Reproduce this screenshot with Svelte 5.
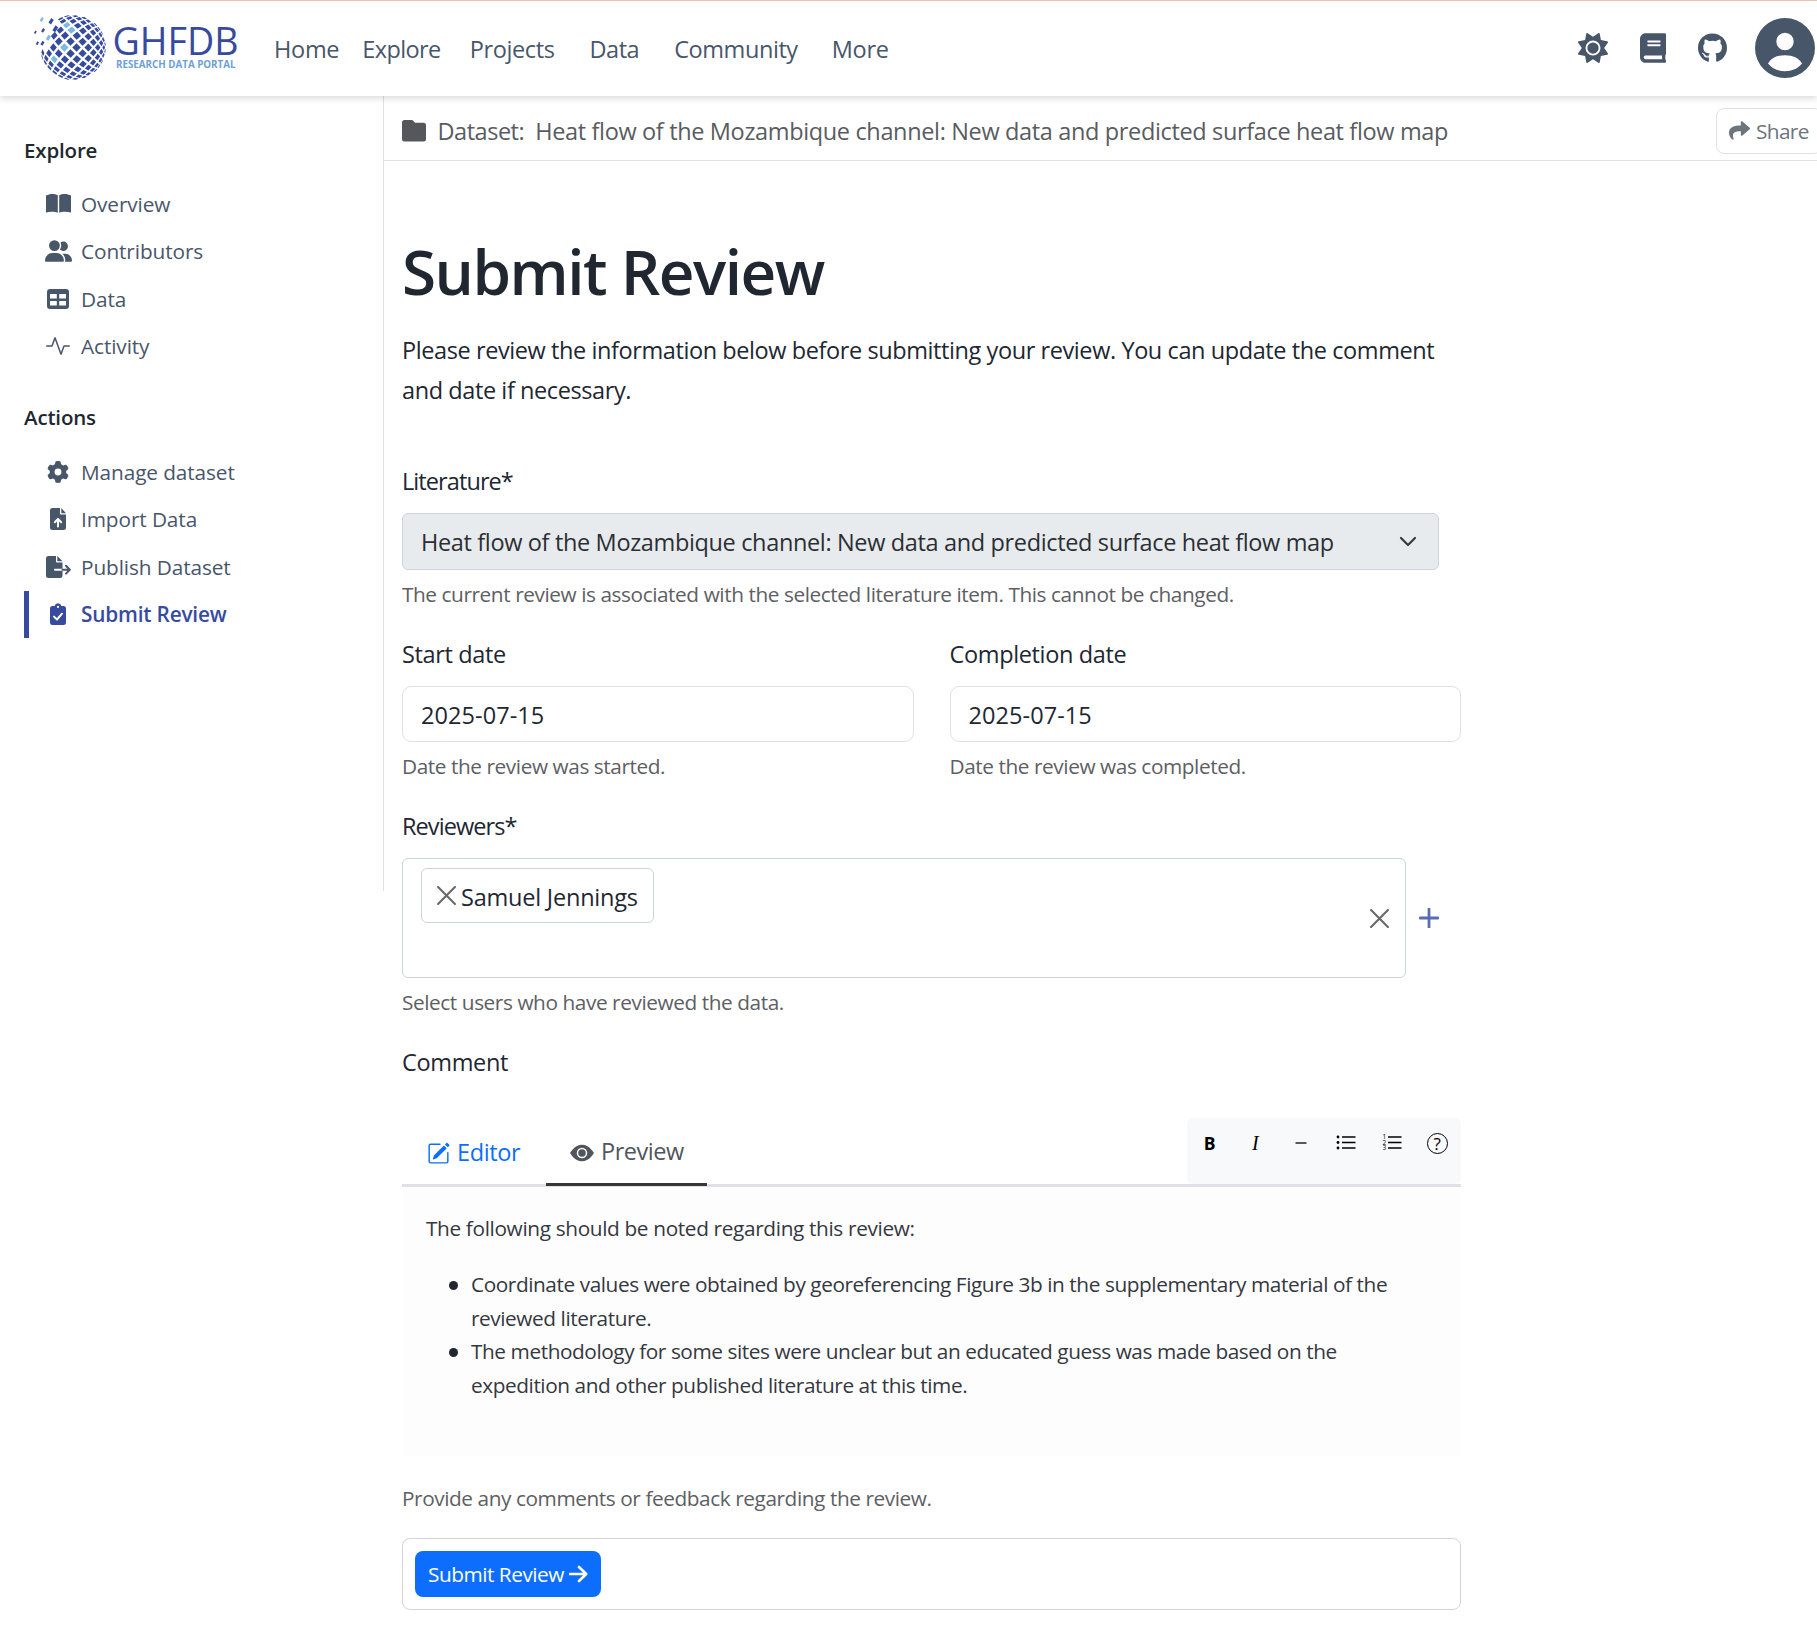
<script>
  const title = 'Heat flow of the Mozambique channel: New data and predicted surface heat flow map';
  const navItems = ['Home', 'Explore', 'Projects', 'Data', 'Community', 'More'];

  const sections = [
    {
      heading: 'Explore',
      items: [
        { label: 'Overview', icon: 'book' },
        { label: 'Contributors', icon: 'users' },
        { label: 'Data', icon: 'table' },
        { label: 'Activity', icon: 'activity' }
      ]
    },
    {
      heading: 'Actions',
      items: [
        { label: 'Manage dataset', icon: 'gear' },
        { label: 'Import Data', icon: 'upload' },
        { label: 'Publish Dataset', icon: 'export' },
        { label: 'Submit Review', icon: 'clipboard', active: true }
      ]
    }
  ];

  // Globe: a diamond lattice wrapped on a sphere whose pole sits left of centre.
  const CX = 45, CY = 36.5, R = 32.7, TILT = 0.27, STEP = 0.268, HALF = 0.094;
  function project(a, b) {
    const u = (a + b) * Math.SQRT1_2;
    const v = (b - a) * Math.SQRT1_2;
    const rho = Math.hypot(u, v) || 1e-6;
    const x = (Math.sin(rho) * u) / rho;
    const y = (Math.sin(rho) * v) / rho;
    const z = Math.cos(rho);
    const c = Math.cos(TILT), s = Math.sin(TILT);
    return [CX + R * (x * c - z * s), CY + R * y, x * s + z * c];
  }
  const light = ['0,0', '2,-1', '2,-2', '-2,0'];
  const cells = [];
  for (let i = -9; i <= 9; i++) {
    for (let j = -9; j <= 9; j++) {
      const a = i * STEP, b = j * STEP;
      if (Math.hypot(a, b) > 2.1) continue;
      const centre = project(a, b);
      if (centre[2] < 0.1) continue;
      if (centre[0] < 22.5 && centre[1] < 40) continue;
      if (centre[0] < 30 && centre[1] < 21) continue;
      const points = [[-HALF, -HALF], [HALF, -HALF], [HALF, HALF], [-HALF, HALF]]
        .map(([p, q]) => project(a + p, b + q).slice(0, 2).map((n) => n.toFixed(2)).join(','))
        .join(' ');
      cells.push({ points, light: light.includes(`${i},${j}`) });
    }
  }
  // Diamonds that have drifted off the globe: x, y, radius, light.
  const loose = [
    [13.7, 8.5, 2.4, 1], [23, 10.2, 3.2, 0], [27.2, 17.8, 3.5, 0], [7.3, 21.2, 1.8, 0], [15, 19.4, 2.4, 0],
    [9.3, 32.2, 2, 0], [14.4, 32.2, 2.5, 0], [20.3, 26.7, 3, 1]
  ];
</script>

{#snippet icon(name)}
  {#if name === 'book'}
    <svg width="25" height="19" viewBox="0 0 25 19"><path d="M0 1.6C3.5-.3 8.500-.5 11.800 1.300V18.700C8.500 17.300 3.500 17.400 0 18.500ZM13.200 1.300C16.500-.5 21.500-.3 25 1.600V18.500C21.500 17.400 16.500 17.300 13.200 18.700Z" /></svg>
  {:else if name === 'users'}
    <svg width="27" height="22" viewBox="0 0 640 512"><path d="M96 128a128 128 0 1 1 256 0A128 128 0 1 1 96 128zM0 482.300C0 383.800 79.800 304 178.300 304h91.400C368.200 304 448 383.800 448 482.300c0 16.400-13.300 29.700-29.700 29.700H29.700C13.300 512 0 498.700 0 482.300zM609.300 512H471.400c5.400-9.400 8.600-20.300 8.600-32v-8c0-60.700-27.100-115.200-69.800-151.800c2.400-.1 4.700-.2 7.100-.2h61.400C567.800 320 640 392.200 640 481.300c0 17-13.800 30.700-30.700 30.700zM432 256c-31 0-59-12.600-79.300-32.900C372.400 196.500 384 163.600 384 128c0-26.800-6.600-52.100-18.300-74.300C384.300 40.100 407.200 32 432 32c61.900 0 112 50.100 112 112s-50.100 112-112 112z" /></svg>
  {:else if name === 'table'}
    <svg width="22" height="20" viewBox="0 0 22 20"><path fill-rule="evenodd" d="M3 0H19a3 3 0 0 1 3 3V17a3 3 0 0 1-3 3H3a3 3 0 0 1-3-3V3a3 3 0 0 1 3-3ZM3 5V9.500H9.800V5ZM12.200 5V9.500H19V5ZM3 12V16.500H9.800V12ZM12.200 12V16.500H19V12Z" /></svg>
  {:else if name === 'activity'}
    <svg width="24" height="24" viewBox="0 0 16 16"><path d="M6 2a.5.5 0 0 1 .47.33L10 12.036l1.530-4.208A.5.5 0 0 1 12 7.500h3.500a.5.5 0 0 1 0 1h-3.150l-1.880 5.170a.5.5 0 0 1-.94 0L6 3.964 4.470 8.171A.5.5 0 0 1 4 8.500H.5a.5.5 0 0 1 0-1h3.150l1.880-5.170A.5.5 0 0 1 6 2Z" /></svg>
  {:else if name === 'gear'}
    <svg width="22" height="22" viewBox="0 0 512 512"><path d="M495.900 166.600c3.200 8.700 .5 18.400-6.400 24.600l-43.300 39.400c1.100 8.300 1.700 16.800 1.700 25.400s-.6 17.100-1.700 25.400l43.300 39.400c6.900 6.200 9.600 15.900 6.400 24.600c-4.400 11.900-9.700 23.300-15.800 34.300l-4.700 8.100c-6.600 11-14 21.400-22.100 31.200c-5.900 7.200-15.700 9.600-24.500 6.800l-55.700-17.700c-13.400 10.300-28.200 18.900-44 25.400l-12.500 57.100c-2 9.100-9 16.300-18.200 17.800c-13.800 2.300-28 3.500-42.500 3.500s-28.700-1.200-42.500-3.500c-9.200-1.500-16.200-8.700-18.200-17.800l-12.500-57.100c-15.800-6.500-30.600-15.100-44-25.400L83.100 425.900c-8.800 2.800-18.600 .3-24.500-6.800c-8.100-9.800-15.500-20.200-22.100-31.200l-4.700-8.100c-6.100-11-11.400-22.400-15.800-34.300c-3.200-8.700-.5-18.400 6.400-24.600l43.300-39.400C64.600 273.100 64 264.600 64 256s.6-17.100 1.700-25.400L22.400 191.200c-6.900-6.200-9.600-15.900-6.400-24.600c4.400-11.900 9.700-23.300 15.800-34.300l4.700-8.100c6.600-11 14-21.400 22.100-31.200c5.900-7.200 15.700-9.600 24.500-6.800l55.700 17.700c13.400-10.300 28.200-18.900 44-25.400l12.500-57.100c2-9.100 9-16.300 18.200-17.800C227.300 1.200 241.500 0 256 0s28.700 1.200 42.500 3.500c9.200 1.500 16.200 8.700 18.200 17.800l12.500 57.100c15.800 6.500 30.600 15.100 44 25.400l55.700-17.700c8.800-2.800 18.600-.3 24.500 6.800c8.100 9.800 15.500 20.200 22.100 31.200l4.700 8.100c6.100 11 11.400 22.400 15.800 34.300zM256 336a80 80 0 1 0 0-160 80 80 0 1 0 0 160z" /></svg>
  {:else if name === 'upload'}
    <svg width="16" height="22" viewBox="0 0 16 22"><path d="M2.500 0H10V5.500a1 1 0 0 0 1 1H16V19.500A2.500 2.500 0 0 1 13.500 22H2.500A2.500 2.500 0 0 1 0 19.500V2.500A2.500 2.500 0 0 1 2.500 0ZM11.300 0 16 5.200H11.300Z" /><path class="cut" d="M8 18.500V11.500M4.800 14.200 8 11 11.200 14.200" /></svg>
  {:else if name === 'export'}
    <svg width="25" height="22" viewBox="0 0 25 22"><path d="M2.500 0H10V5.500a1 1 0 0 0 1 1H16.500V19.500A2.500 2.500 0 0 1 14 22H2.500A2.500 2.500 0 0 1 0 19.500V2.500A2.500 2.500 0 0 1 2.500 0ZM11.300 0 16.500 5.200H11.300Z" /><path class="cut" d="M9 13.700H16.500" /><path class="line" d="M16.500 13.700H23.500M20 9.800 23.800 13.700 20 17.600" /></svg>
  {:else}
    <svg width="16" height="22" viewBox="0 0 16 22"><path fill-rule="evenodd" d="M2.500 3H4.600A3.500 3.500 0 0 1 11.400 3H13.500A2.500 2.500 0 0 1 16 5.500V19.500A2.500 2.500 0 0 1 13.500 22H2.500A2.500 2.500 0 0 1 0 19.500V5.500A2.500 2.500 0 0 1 2.500 3ZM8 2.800A1.100 1.100 0 1 0 8 5 1.100 1.100 0 1 0 8 2.800Z" /><path class="cut" d="M4 13.600 7 16.500 12 10.700" /></svg>
  {/if}
{/snippet}

{#snippet cross(size)}
  <svg class="cross" width={size} height={size} viewBox="0 0 18 18"><path d="M1 1 17 17M17 1 1 17" /></svg>
{/snippet}

<div class="page">
  <header>
    <svg class="logo" width="215" height="76" viewBox="0 0 215 76" role="img" aria-label="GHFDB">
      {#each cells as cell}<polygon points={cell.points} class:light={cell.light} />{/each}
      {#each loose as [x, y, r, l]}
        <polygon points="{x - r * 0.8},{y + r * 0.4} {x + r * 0.1},{y - r} {x + r * 0.85},{y - r * 0.4} {x},{y + r}" class:light={l === 1} />
      {/each}
      <text class="brand" x="84.500" y="44.200" textLength="126" lengthAdjust="spacingAndGlyphs">GHFDB</text>
      <text class="tagline" x="88" y="56.500" textLength="119.500" lengthAdjust="spacingAndGlyphs">RESEARCH DATA PORTAL</text>
    </svg>
    <nav>
      {#each navItems as item}<a href="#top">{item}</a>{/each}
    </nav>
    <div class="tools">
      <svg width="30" height="30" viewBox="0 0 512 512"><path d="M361.500 1.200c5 2.100 8.600 6.600 9.600 11.900L391 121l107.900 19.800c5.300 1 9.800 4.600 11.900 9.600s1.500 10.700-1.600 15.200L446.900 256l62.300 90.300c3.100 4.500 3.700 10.200 1.600 15.200s-6.600 8.600-11.900 9.600L391 391 371.100 498.900c-1 5.300-4.600 9.800-9.600 11.900s-10.700 1.500-15.200-1.600L256 446.900l-90.300 62.300c-4.500 3.100-10.200 3.700-15.200 1.600s-8.600-6.600-9.600-11.900L121 391 13.100 371.100c-5.300-1-9.800-4.600-11.900-9.600s-1.500-10.700 1.600-15.200L65.100 256 2.800 165.700c-3.100-4.500-3.700-10.200-1.600-15.200s6.600-8.600 11.900-9.600L121 121 140.900 13.100c1-5.300 4.600-9.800 9.600-11.900s10.700-1.500 15.200 1.600L256 65.100 346.300 2.800c4.500-3.100 10.200-3.700 15.200-1.600zM160 256a96 96 0 1 1 192 0 96 96 0 1 1 -192 0zm224 0a128 128 0 1 0 -256 0 128 128 0 1 0 256 0z" /></svg>
      <svg width="26" height="30" viewBox="0 0 448 512"><path d="M448 360V24c0-13.300-10.700-24-24-24H96C43 0 0 43 0 96v320c0 53 43 96 96 96h328c13.300 0 24-10.700 24-24v-16c0-7.500-3.500-14.300-8.900-18.700-4.200-15.400-4.200-59.300 0-74.700 5.400-4.300 8.900-11.100 8.900-18.600zM128 134c0-3.300 2.700-6 6-6h212c3.300 0 6 2.700 6 6v20c0 3.300-2.700 6-6 6H134c-3.300 0-6-2.700-6-6v-20zm0 64c0-3.300 2.700-6 6-6h212c3.300 0 6 2.700 6 6v20c0 3.300-2.700 6-6 6H134c-3.300 0-6-2.700-6-6v-20zm253.400 250H96c-17.700 0-32-14.300-32-32 0-17.600 14.400-32 32-32h285.400c-1.900 17.100-1.900 46.900 0 64z" /></svg>
      <svg width="29" height="30" viewBox="0 0 496 512"><path d="M165.900 397.400c0 2-2.300 3.600-5.200 3.600-3.300.3-5.600-1.300-5.600-3.600 0-2 2.300-3.600 5.200-3.600 3-.3 5.600 1.300 5.600 3.600zm-31.100-4.500c-.7 2 1.300 4.300 4.300 4.900 2.600 1 5.600 0 6.200-2s-1.300-4.300-4.300-5.200c-2.600-.7-5.500.3-6.200 2.300zm44.200-1.700c-2.900.7-4.900 2.600-4.600 4.900.3 2 2.900 3.300 5.900 2.600 2.900-.7 4.900-2.600 4.600-4.600-.3-1.900-3-3.200-5.900-2.900zM244.800 8C106.100 8 0 113.300 0 252c0 110.900 69.800 205.800 169.500 239.200 12.800 2.300 17.300-5.600 17.300-12.100 0-6.200-.3-40.400-.3-61.400 0 0-70 15-84.700-29.800 0 0-11.400-29.100-27.800-36.600 0 0-22.900-15.700 1.600-15.400 0 0 24.900 2 38.600 25.800 21.900 38.600 58.600 27.500 72.900 20.900 2.300-16 8.800-27.100 16-33.700-55.900-6.200-112.300-14.300-112.300-110.500 0-27.500 7.600-41.300 23.600-58.900-2.600-6.500-11.100-33.300 2.600-67.900 20.900-6.500 69 27 69 27 20-5.600 41.500-8.500 62.800-8.500s42.800 2.900 62.800 8.500c0 0 48.100-33.600 69-27 13.700 34.700 5.200 61.400 2.600 67.900 16 17.700 25.800 31.500 25.800 58.900 0 96.500-58.900 104.200-114.800 110.500 9.200 7.900 17 22.900 17 46.400 0 33.700-.3 75.400-.3 83.600 0 6.500 4.600 14.400 17.300 12.100C428.200 457.800 496 362.900 496 252 496 113.300 383.500 8 244.800 8zM97.200 352.900c-1.300 1-1 3.300.7 5.200 1.600 1.600 3.900 2.300 5.200 1 1.300-1 1-3.300-.7-5.200-1.600-1.600-3.900-2.300-5.200-1z" /></svg>
      <svg class="avatar" width="60" height="60" viewBox="0 0 60 60"><path fill-rule="evenodd" d="M30 0A30 30 0 1 0 30 60 30 30 0 1 0 30 0ZM30 14.800A8.700 8.700 0 1 1 30 32.200 8.700 8.700 0 1 1 30 14.800ZM13 45.500C16 40 22 37.200 30 37.200S44 40 47 45.500C43 50.500 37 53.200 30 53.200S17 50.500 13 45.500Z" /></svg>
    </div>
  </header>

  <div class="body">
    <aside>
      {#each sections as section}
        <h2>{section.heading}</h2>
        <ul>
          {#each section.items as item}
            <li class:active={item.active}>
              <span class="slot">{@render icon(item.icon)}</span>{item.label}
            </li>
          {/each}
        </ul>
      {/each}
    </aside>

    <main>
      <div class="crumbs">
        <svg width="24" height="22" viewBox="0 0 24 22"><path d="M2.500 0H9.500a2.500 2.500 0 0 1 1.800.8L13 2.800H21.500A2.500 2.500 0 0 1 24 5.300V19A2.500 2.500 0 0 1 21.500 21.500H2.500A2.500 2.500 0 0 1 0 19V2.500A2.500 2.500 0 0 1 2.500 0Z" /></svg>
        <span class="kind">Dataset:</span>
        <span class="name">{title}</span>
        <button class="share">
          <svg width="21" height="21" viewBox="0 0 512 512"><path d="M503.691 189.836L327.687 37.851C312.281 24.546 288 35.347 288 56.015v80.053C127.371 137.907 0 170.100 0 322.326c0 61.441 39.581 122.309 83.333 154.132 13.653 9.931 33.111-2.533 28.077-18.631C66.066 312.814 132.917 274.316 288 272.085V360c0 20.700 24.300 31.453 39.687 18.164l176.004-151.985c11.070-9.562 11.086-26.762 0-36.343z" /></svg>
          Share
        </button>
      </div>

      <form onsubmit={(e) => e.preventDefault()}>
        <h1>Submit Review</h1>
        <p class="lead">Please review the information below before submitting your review. You can update the comment<br />and date if necessary.</p>

        <div class="field first">
          <div class="label tight">Literature*</div>
          <div class="select">
            <span>{title}</span>
            <svg width="18" height="12" viewBox="0 0 18 12"><path d="M2 2 9 9 16 2" /></svg>
          </div>
          <div class="help">The current review is associated with the selected literature item. This cannot be changed.</div>
        </div>

        <div class="dates">
          <div class="field">
            <div class="label">Start date</div>
            <div class="input">2025-07-15</div>
            <div class="help">Date the review was started.</div>
          </div>
          <div class="field">
            <div class="label">Completion date</div>
            <div class="input">2025-07-15</div>
            <div class="help">Date the review was completed.</div>
          </div>
        </div>

        <div class="field">
          <div class="label tight">Reviewers*</div>
          <div class="picker">
            <div class="box">
              <div class="tag">{@render cross(19)}<span>Samuel Jennings</span></div>
              {@render cross(19)}
            </div>
            <svg class="plus" width="20" height="20" viewBox="0 0 20 20"><path d="M10 1V19M1 10H19" /></svg>
          </div>
          <div class="help">Select users who have reviewed the data.</div>
        </div>

        <div class="field">
          <div class="label comment">Comment</div>
          <div class="tabs">
            <div class="tab editor">
              <svg width="23" height="23" viewBox="0 0 16 16"><path d="M15.502 1.940a.5.5 0 0 1 0 .706L14.459 3.690l-2-2L13.502.646a.5.5 0 0 1 .707 0l1.293 1.293zm-1.750 2.456-2-2L4.939 9.210a.5.5 0 0 0-.121.196l-.805 2.414a.25.25 0 0 0 .316.316l2.414-.805a.5.5 0 0 0 .196-.12l6.813-6.814z" /><path d="M1 13.500A1.500 1.500 0 0 0 2.500 15h11a1.500 1.500 0 0 0 1.500-1.500v-6a.5.5 0 0 0-1 0v6a.5.5 0 0 1-.5.5h-11a.5.5 0 0 1-.5-.5v-11a.5.5 0 0 1 .5-.5H9a.5.5 0 0 0 0-1H2.500A1.500 1.500 0 0 0 1 2.500v11z" /></svg>
              Editor
            </div>
            <div class="tab preview">
              <svg width="24" height="24" viewBox="0 0 16 16"><path d="M10.500 8a2.500 2.500 0 1 1-5 0 2.500 2.500 0 0 1 5 0z" /><path d="M0 8s3-5.500 8-5.500S16 8 16 8s-3 5.500-8 5.500S0 8 0 8zm8 3.500a3.500 3.500 0 1 0 0-7 3.500 3.500 0 0 0 0 7z" /></svg>
              Preview
            </div>
            <div class="toolbar">
              <b>B</b>
              <i>I</i>
              <svg width="12" height="20" viewBox="0 0 12 20"><path d="M.5 10H11.500" /></svg>
              <svg width="20" height="20" viewBox="0 0 20 20"><path d="M6 4H19.500M6 9.500H19.500M6 15H19.500" /><circle cx="2" cy="4" r="1.400" /><circle cx="2" cy="9.500" r="1.400" /><circle cx="2" cy="15" r="1.400" /></svg>
              <svg width="20" height="20" viewBox="0 0 20 20"><path d="M6 4H19.500M6 9.500H19.500M6 15H19.500" /><text x=".5" y="6.300">1</text><text x=".5" y="11.800">2</text><text x=".5" y="17.300">3</text></svg>
              <span class="question">?</span>
            </div>
          </div>
          <div class="rendered">
            <p>The following should be noted regarding this review:</p>
            <ul>
              <li>Coordinate values were obtained by georeferencing Figure 3b in the supplementary material of the<br />reviewed literature.</li>
              <li>The methodology for some sites were unclear but an educated guess was made based on the<br />expedition and other published literature at this time.</li>
            </ul>
          </div>
          <div class="help last">Provide any comments or feedback regarding the review.</div>
        </div>

        <div class="actions">
          <button class="submit">
            Submit Review
            <svg width="19" height="18" viewBox="0 0 19 18"><path d="M1 9H17M10 2 17.200 9 10 16" /></svg>
          </button>
        </div>
      </form>
    </main>
  </div>
</div>

<style>
  :global(body) { background: #fff; overflow: hidden; }
  .page {
    width: 1817px;
    height: 1634px;
    overflow: hidden;
    box-sizing: border-box;
    border-top: 1px solid #ecc5b0;
    font-family: 'Open Sans', 'Noto Sans', sans-serif;
    font-size: 23.5px;
    letter-spacing: -0.015em;
    color: #212731;
  }
  .page :global(*) { box-sizing: border-box; }
  svg { flex: none; display: block; fill: currentColor; }
  ul { list-style: none; margin: 0; padding: 0; }
  button { font: inherit; letter-spacing: inherit; }

  header {
    position: relative;
    height: 95px;
    display: flex;
    align-items: center;
    padding-left: 28px;
    box-shadow: 0 3px 6px rgba(0, 0, 0, 0.13);
    color: #48566a;
    white-space: nowrap;
  }
  .logo { fill: #364b9f; }
  .logo .light { fill: #7bb8e2; }
  .brand { font-size: 38.500px; letter-spacing: 0; }
  .tagline { font-size: 10.200px; font-weight: 700; letter-spacing: 0; fill: #6d9fd6; }
  nav { display: flex; gap: 25px; margin-left: 31px; }
  nav a { color: inherit; text-decoration: none; letter-spacing: -0.012em; }
  nav a:nth-child(1) { margin-right: -2px; }
  nav a:nth-child(2) { letter-spacing: -0.026em; margin-right: 4px; }
  nav a:nth-child(3) { letter-spacing: -0.016em; margin-right: 10px; }
  nav a:nth-child(4) { letter-spacing: -0.020em; margin-right: 10px; }
  nav a:nth-child(5) { letter-spacing: -0.018em; margin-right: 9px; }
  .tools { display: flex; align-items: center; gap: 32px; margin-left: auto; padding: 0 2px 1px 0; }
  .avatar { margin-left: -4px; }

  .body { display: flex; align-items: flex-start; }
  aside {
    flex: none;
    width: 384px;
    height: 795px;
    padding-top: 38.500px;
    border-right: 1px solid #dee2e6;
    font-size: 20.800px;
    letter-spacing: -0.005em;
  }
  h2 {
    margin: 0 0 15.300px;
    padding-left: 24px;
    font-size: 20.500px;
    font-weight: 600;
    line-height: 30px;
    letter-spacing: -0.008em;
  }
  ul + h2 { margin-top: 32px; margin-bottom: 15.600px; }
  aside li {
    display: flex;
    align-items: center;
    height: 47.600px;
    margin-left: 24px;
    padding-left: 14px;
    border-left: 5px solid transparent;
    color: #48566a;
  }
  .slot { width: 30px; margin-right: 8px; display: flex; justify-content: center; }
  aside li.active { color: #364b9f; border-color: #364b9f; font-weight: 600; letter-spacing: -0.009em; }
  .cut, .line { fill: none; stroke: #fff; stroke-width: 2; stroke-linecap: round; stroke-linejoin: round; }
  .line { stroke: currentColor; }

  main { flex: 1; min-width: 0; }
  .crumbs {
    display: flex;
    align-items: center;
    height: 65px;
    padding: 5px 0 0 18px;
    border-bottom: 1px solid #dee2e6;
    color: #595c5f;
    white-space: nowrap;
    overflow: hidden;
  }
  .crumbs svg { fill: #54585c; }
  .kind { margin: 0 11px 0 11.500px; letter-spacing: -0.020em; }
  .share {
    flex: none;
    display: flex;
    align-items: center;
    gap: 6px;
    width: 106px;
    height: 46px;
    margin-left: auto;
    margin-right: -5px;
    padding: 0 0 0 12px;
    border: 1px solid #dee2e6;
    border-radius: 8px;
    background: #fff;
    color: #6c757d;
    font-size: 20.800px;
    letter-spacing: -0.030em;
  }
  .crumbs .share svg { fill: #6c757d; }

  form { width: 1078px; padding: 70px 0 0 18px; white-space: nowrap; }
  h1 { margin: 0; font-size: 62px; font-weight: 600; line-height: 80px; letter-spacing: -0.024em; }
  .lead { margin: 19px 0 -1px; line-height: 40.200px; letter-spacing: -0.0175em; }
  .field { padding-top: 26px; }
  .first { padding-top: 54px; }
  .label { line-height: 37px; margin-bottom: 13px; }
  .tight { letter-spacing: -0.039em; }
  .help { margin-top: 8px; line-height: 32px; font-size: 20.800px; letter-spacing: -0.0205em; color: #5d6063; }
  .select {
    display: flex;
    align-items: center;
    justify-content: space-between;
    width: 1037px;
    height: 57px;
    padding: 0 21px 0 18px;
    border: 1px solid #ced4da;
    border-radius: 6px;
    background: #e8ebee;
    color: #2b2f33;
  }
  .select svg { fill: none; stroke: #343a40; stroke-width: 2.200; stroke-linecap: round; stroke-linejoin: round; }
  .dates { display: grid; grid-template-columns: 1fr 1fr; gap: 36px; width: 1059px; }
  .input {
    height: 56px;
    padding: 1px 18px 0;
    border: 1px solid #dee2e6;
    border-radius: 9px;
    line-height: 55px;
    letter-spacing: 0.003em;
  }
  .picker { display: flex; align-items: center; gap: 13px; }
  .box {
    display: flex;
    align-items: center;
    justify-content: space-between;
    width: 1004px;
    height: 120px;
    padding: 9px 16px 9px 18px;
    border: 1px solid #ced4da;
    border-radius: 6px;
  }
  .tag {
    align-self: flex-start;
    display: flex;
    align-items: center;
    gap: 5px;
    width: 233px;
    height: 55px;
    padding: 2px 0 0 15px;
    border: 1px solid #ced4da;
    border-radius: 6px;
    letter-spacing: -0.009em;
  }
  .cross { fill: none; stroke: #67696b; stroke-width: 2; stroke-linecap: round; }
  .tag .cross { margin-top: -2px; }
  .plus { fill: none; stroke: #5a6db3; stroke-width: 2.800; stroke-linecap: round; }

  .comment { margin-bottom: 0; }
  .tabs {
    display: flex;
    height: 69px;
    width: 1059px;
    margin-top: 37px;
    border-bottom: 3px solid #dee2e6;
  }
  .tab { display: flex; align-items: center; height: 68px; padding-bottom: 1px; }
  .tab svg { margin-top: 4px; }
  .editor { width: 143.500px; padding-left: 25px; gap: 7px; color: #0d6efd; }
  .preview { width: 161px; padding-left: 24.500px; gap: 7px; color: #50565c; border-bottom: 3px solid #393634; padding-bottom: 0; margin-bottom: -2px; letter-spacing: -0.020em; }
  .toolbar {
    display: grid;
    grid-template-columns: repeat(6, 45.500px);
    justify-items: center;
    align-items: center;
    align-content: start;
    grid-auto-rows: 50px;
    width: 274px;
    height: 66px;
    margin-left: auto;
    border-radius: 6px;
    background: #f8f9fb;
    color: #000;
    letter-spacing: 0;
  }
  .toolbar svg { stroke: #000; stroke-width: 1.300; }
  .toolbar circle { stroke: none; }
  .toolbar text { font-size: 6.500px; stroke: none; }
  .toolbar b { font-size: 17.500px; }
  .toolbar i { font-family: 'Liberation Serif', serif; font-size: 20px; }
  .question {
    display: flex;
    align-items: center;
    justify-content: center;
    width: 21px;
    height: 21px;
    border: 1.500px solid #000;
    border-radius: 50%;
    font-size: 17px;
    font-weight: 500;
    line-height: 1;
  }
  .rendered {
    width: 1059px;
    height: 269px;
    padding: 24.600px 24px 0;
    background: #fdfdfd;
    color: #343840;
    font-size: 20.800px;
    line-height: 33.750px;
    letter-spacing: -0.0205em;
  }
  .rendered p { margin: 0 0 22px; letter-spacing: -0.017em; }
  .rendered li { display: flow-root; padding-left: 45px; position: relative; }
  .rendered li::before {
    content: '';
    position: absolute;
    left: 23px;
    top: 13px;
    width: 9px;
    height: 9px;
    border-radius: 50%;
    background: #212731;
  }
  .last { margin-top: 26px; }
  .actions {
    display: flex;
    align-items: center;
    width: 1059px;
    height: 72px;
    margin-top: 24px;
    padding-left: 12px;
    border: 1px solid #d2d4d6;
    border-radius: 8px;
  }
  .submit {
    display: flex;
    align-items: center;
    gap: 5px;
    width: 186px;
    height: 46px;
    padding: 0 0 0 13px;
    border: 0;
    border-radius: 8px;
    background: #0d6efd;
    color: #fff;
    font-size: 20.800px;
    letter-spacing: -0.023em;
    white-space: nowrap;
  }
  .submit svg { fill: none; stroke: #fff; stroke-width: 2.600; stroke-linecap: round; stroke-linejoin: round; }
</style>
